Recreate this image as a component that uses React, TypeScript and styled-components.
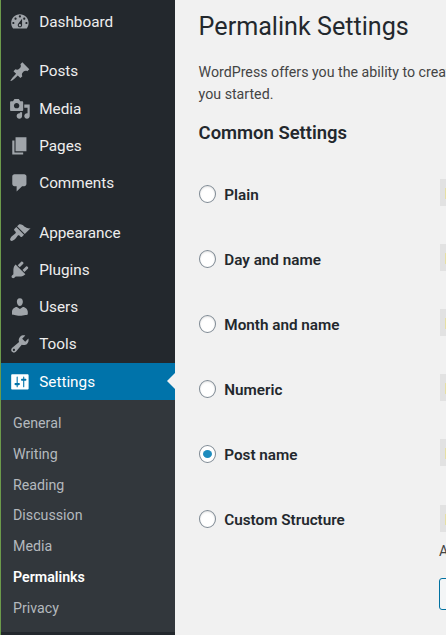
import React from "react";
import styled, { createGlobalStyle, css } from "styled-components";

const GlobalStyle = createGlobalStyle`
  * { box-sizing: border-box; }
  body {
    margin: 0;
    background: #f1f1f1;
    font-family: Roboto, "Liberation Sans", sans-serif;
    overflow: hidden;
  }
`;

const Page = styled.div`
  display: flex;
  width: 446px;
  height: 635px;
  overflow: hidden;
`;

const Sidebar = styled.nav`
  flex: 0 0 175px;
  height: 635px;
  overflow: hidden;
  background: #23282d;
  border-left: 1px solid #6c9a4b;
`;

const Menu = styled.div`
  display: flex;
  flex-direction: column;
  gap: 12.05px;
  padding-top: 3.5px;
`;

const MenuGroup = styled.ul`
  list-style: none;
  margin: 0;
  padding: 0;
`;

const MenuItem = styled.li<{ $active?: boolean }>`
  position: relative;
  display: flex;
  align-items: center;
  gap: 8.6px;
  height: 37.27px;
  padding-left: 7.8px;
  font-size: 15.3px;
  color: ${(p) => (p.$active ? "#fff" : "#eee")};
  ${(p) =>
    p.$active &&
    css`
      background: #0073aa;
      &::after {
        content: "";
        position: absolute;
        right: 0;
        top: 10px;
        border: 8.5px solid transparent;
        border-left-width: 0;
        border-right-color: #f1f1f1;
      }
    `}
`;

const MenuIcon = styled.svg<{ $active?: boolean }>`
  flex: none;
  width: 21.8px;
  height: 21.8px;
  fill: ${(p) => (p.$active ? "#fff" : "#a0a5aa")};
`;

const Submenu = styled.ul`
  list-style: none;
  margin: 0;
  padding: 7.7px 0 8.3px 12px;
  background: #32373c;
`;

const SubmenuItem = styled.li<{ $current?: boolean }>`
  height: 30.8px;
  line-height: 30.8px;
  font-size: 14.22px;
  font-weight: ${(p) => (p.$current ? 600 : 400)};
  color: ${(p) => (p.$current ? "#fff" : "#b4b9be")};
`;

const Main = styled.main`
  flex: none;
  width: 700px;
  padding: 10px 0 0 23.6px;
  color: #444;
`;

const Title = styled.h1`
  margin: 0;
  font-size: 25.15px;
  line-height: 34px;
  font-weight: 400;
  color: #23282d;
`;

const Intro = styled.p`
  margin: 17px 0 0;
  font-size: 14.2px;
  line-height: 22px;
  white-space: nowrap;
`;

const SectionTitle = styled.h2`
  margin: 15px 0 0;
  font-size: 18.45px;
  line-height: 26px;
  font-weight: 600;
  color: #23282d;
`;

const Options = styled.div`
  padding-top: 17px;
`;

const OptionRow = styled.div`
  display: grid;
  grid-template-columns: 240px 1fr;
  height: 65.12px;
  padding-top: 16px;
`;

const OptionLabel = styled.label`
  display: flex;
  align-items: center;
  align-self: start;
  gap: 8.3px;
  height: 30px;
  margin-top: -0.3px;
  padding-left: 0.4px;
  font-size: 15.25px;
  font-weight: 600;
  color: #23282d;
`;

const LabelText = styled.span`
  padding-top: 2px;
`;

const Radio = styled.span<{ $checked?: boolean }>`
  display: flex;
  align-items: center;
  justify-content: center;
  width: 17px;
  height: 18px;
  border: 1px solid #7e8993;
  border-radius: 50%;
  background: #fff;
  box-shadow: ${(p) => (p.$checked ? "none" : "inset 0 1px 2px rgba(0, 0, 0, 0.12)")};

  &::before {
    content: "";
    display: ${(p) => (p.$checked ? "block" : "none")};
    width: 9px;
    height: 8px;
    border-radius: 50%;
    background: #1e8cbe;
  }
`;

const Example = styled.div`
  padding-left: 0.4px;
`;

const Code = styled.code`
  display: flex;
  align-items: center;
  width: 300px;
  height: 27px;
  margin-left: 1px;
  padding-left: 5px;
  background: #e2e2e2;
`;

const Highlight = styled.span`
  width: 60px;
  height: 11px;
  margin-top: 2px;
  background: #e6dfa5;
`;

const Tags = styled.div`
  font-size: 14.2px;
  line-height: 22px;
  padding-top: 8.6px;
  white-space: nowrap;
`;

const TagButton = styled.button`
  display: block;
  width: 80px;
  height: 32px;
  margin-top: 15.6px;
  border: 1px solid #0071a1;
  border-radius: 3px;
  background: #f3f5f6;
`;

type Entry = { label: string; path: string; active?: boolean };

const groups: Entry[][] = [
  [
    {
      label: "Dashboard",
      path: "M3.76 16h12.48c1.1-1.37 1.76-3.11 1.76-5 0-4.42-3.58-8-8-8s-8 3.58-8 8c0 1.89.66 3.63 1.76 5zM10 4c.55 0 1 .45 1 1s-.45 1-1 1-1-.45-1-1 .45-1 1-1zM6 6c.55 0 1 .45 1 1s-.45 1-1 1-1-.45-1-1 .45-1 1-1zm8 0c.55 0 1 .45 1 1s-.45 1-1 1-1-.45-1-1 .45-1 1-1zm-5.37 5.55L12 7v6c0 1.1-.9 2-2 2s-2-.9-2-2c0-.57.24-1.08.63-1.45zM4 10c.55 0 1 .45 1 1s-.45 1-1 1-1-.45-1-1 .45-1 1-1zm12 0c.55 0 1 .45 1 1s-.45 1-1 1-1-.45-1-1 .45-1 1-1zm-5 3c0-.55-.45-1-1-1s-1 .45-1 1 .45 1 1 1 1-.45 1-1z",
    },
  ],
  [
    {
      label: "Posts",
      path: "M10.44 3.02l1.82-1.82 6.36 6.35-1.83 1.82c-1.05-.68-2.48-.57-3.41.36l-.75.75c-.92.93-1.04 2.35-.35 3.41l-1.83 1.82-2.41-2.41-2.8 2.79c-.42.42-3.38 2.71-3.8 2.29s1.86-3.39 2.28-3.81l2.79-2.79L4.1 9.36l1.83-1.82c1.05.69 2.48.57 3.4-.36l.75-.75c.93-.92 1.05-2.35.36-3.41z",
    },
    {
      label: "Media",
      path: "M13 11V4c0-.55-.45-1-1-1h-1.67L9 1H5L3.67 3H2c-.55 0-1 .45-1 1v7c0 .55.45 1 1 1h10c.55 0 1-.45 1-1zM7 4.5c1.38 0 2.5 1.12 2.5 2.5S8.38 9.5 7 9.5 4.5 8.38 4.5 7 5.62 4.5 7 4.5zM14 6h5v10.5c0 1.38-1.12 2.5-2.5 2.5S14 17.88 14 16.5s1.12-2.5 2.5-2.5c.17 0 .34.02.5.05V9h-3V6zm-4 8.05V13h2v3.5c0 1.38-1.12 2.5-2.5 2.5S7 17.88 7 16.5 8.12 14 9.5 14c.17 0 .34.02.5.05z",
    },
    { label: "Pages", path: "M6 15V2h10v13H6zm-1 1h8v2H3V5h2v11z" },
    {
      label: "Comments",
      path: "M5 2h9c1.1 0 2 .9 2 2v7c0 1.1-.9 2-2 2h-2l-5 5v-5H5c-1.1 0-2-.9-2-2V4c0-1.1.9-2 2-2z",
    },
  ],
  [
    {
      label: "Appearance",
      path: "M14.48 11.06L7.41 3.99l1.5-1.5c.5-.56 2.3-.47 3.51.32 1.21.8 1.43 1.28 2.91 2.1 1.18.64 2.45 1.26 4.45.85zm-.71.71L6.7 4.7 4.93 6.47c-.39.39-.39 1.02 0 1.41l1.06 1.06c.39.39.39 1.03 0 1.42-.6.6-1.43 1.11-2.21 1.69-.35.26-.7.53-1.01.84C1.43 14.23.4 16.08 1.4 17.07c.99 1 2.84-.03 4.18-1.36.31-.31.58-.66.85-1.02.57-.78 1.08-1.61 1.69-2.21.39-.39 1.02-.39 1.41 0l1.06 1.06c.39.39 1.02.39 1.41 0z",
    },
    {
      label: "Plugins",
      path: "M13.11 4.36L9.87 7.6 8 5.73l3.24-3.24c.35-.34 1.05-.2 1.56.32.52.51.66 1.21.31 1.55zm-8 1.77l.91-1.12 9.01 9.01-1.19.84c-.71.71-2.63 1.16-3.82 1.16H6.14L4.9 17.26c-.59.59-1.54.59-2.12 0-.59-.58-.59-1.53 0-2.12l1.24-1.24v-3.88c0-1.13.4-3.19 1.09-3.89zm7.26 3.97l3.24-3.24c.34-.35 1.04-.21 1.55.31.52.51.66 1.21.31 1.55l-3.24 3.25z",
    },
    {
      label: "Users",
      path: "M10 9.25c-2.27 0-2.73-3.44-2.73-3.44C7 4.02 7.82 2 9.97 2c2.16 0 2.98 2.02 2.71 3.81 0 0-.41 3.44-2.68 3.44zm0 2.57L12.72 10c2.39 0 4.52 2.33 4.52 4.53v2.49s-3.65 1.13-7.24 1.13c-3.65 0-7.24-1.13-7.24-1.13v-2.49c0-2.25 1.94-4.48 4.47-4.48z",
    },
    {
      label: "Tools",
      path: "M16.68 9.77c-1.34 1.34-3.3 1.67-4.95.99l-5.41 6.52c-.99.99-2.59.99-3.58 0s-.99-2.59 0-3.57l6.52-5.42c-.68-1.65-.35-3.61.99-4.95 1.28-1.28 3.12-1.62 4.72-1.06l-2.89 2.89 2.82 2.82 2.86-2.87c.53 1.58.18 3.39-1.08 4.65zM3.81 16.21c.4.39 1.04.39 1.43 0 .4-.4.4-1.04 0-1.43-.39-.4-1.03-.4-1.43 0-.39.39-.39 1.03 0 1.43z",
    },
    {
      label: "Settings",
      active: true,
      path: "M18 16V4c0-.55-.45-1-1-1H3c-.55 0-1 .45-1 1v12c0 .55.45 1 1 1h14c.55 0 1-.45 1-1zM8 11h1c.55 0 1 .45 1 1s-.45 1-1 1H8v1.5c0 .28-.22.5-.5.5s-.5-.22-.5-.5V13H6c-.55 0-1-.45-1-1s.45-1 1-1h1V5.5c0-.28.22-.5.5-.5s.5.22.5.5V11zm5-2h-1c-.55 0-1-.45-1-1s.45-1 1-1h1V5.5c0-.28.22-.5.5-.5s.5.22.5.5V7h1c.55 0 1 .45 1 1s-.45 1-1 1h-1v5.5c0 .28-.22.5-.5.5s-.5-.22-.5-.5V9z",
    },
  ],
];

const submenu = ["General", "Writing", "Reading", "Discussion", "Media", "Permalinks", "Privacy"];

const options = ["Plain", "Day and name", "Month and name", "Numeric", "Post name", "Custom Structure"];

export default function App() {
  return (
    <>
      <GlobalStyle />
      <Page>
        <Sidebar>
          <Menu>
            {groups.map((group) => (
              <MenuGroup key={group[0].label}>
                {group.map((item) => (
                  <MenuItem key={item.label} $active={item.active}>
                    <MenuIcon viewBox="0 0 20 20" $active={item.active}>
                      <path d={item.path} />
                    </MenuIcon>
                    {item.label}
                  </MenuItem>
                ))}
              </MenuGroup>
            ))}
          </Menu>
          <Submenu>
            {submenu.map((label) => (
              <SubmenuItem key={label} $current={label === "Permalinks"}>
                {label}
              </SubmenuItem>
            ))}
          </Submenu>
        </Sidebar>
        <Main>
          <Title>Permalink Settings</Title>
          <Intro>
            WordPress offers you the ability to create
            <br />
            you started.
          </Intro>
          <SectionTitle>Common Settings</SectionTitle>
          <Options>
            {options.map((label) => (
              <OptionRow key={label}>
                <OptionLabel>
                  <Radio $checked={label === "Post name"} />
                  <LabelText>{label}</LabelText>
                </OptionLabel>
                <Example>
                  <Code>
                    <Highlight />
                  </Code>
                  {label === "Custom Structure" && (
                    <>
                      <Tags>Available tags:</Tags>
                      <TagButton />
                    </>
                  )}
                </Example>
              </OptionRow>
            ))}
          </Options>
        </Main>
      </Page>
    </>
  );
}
